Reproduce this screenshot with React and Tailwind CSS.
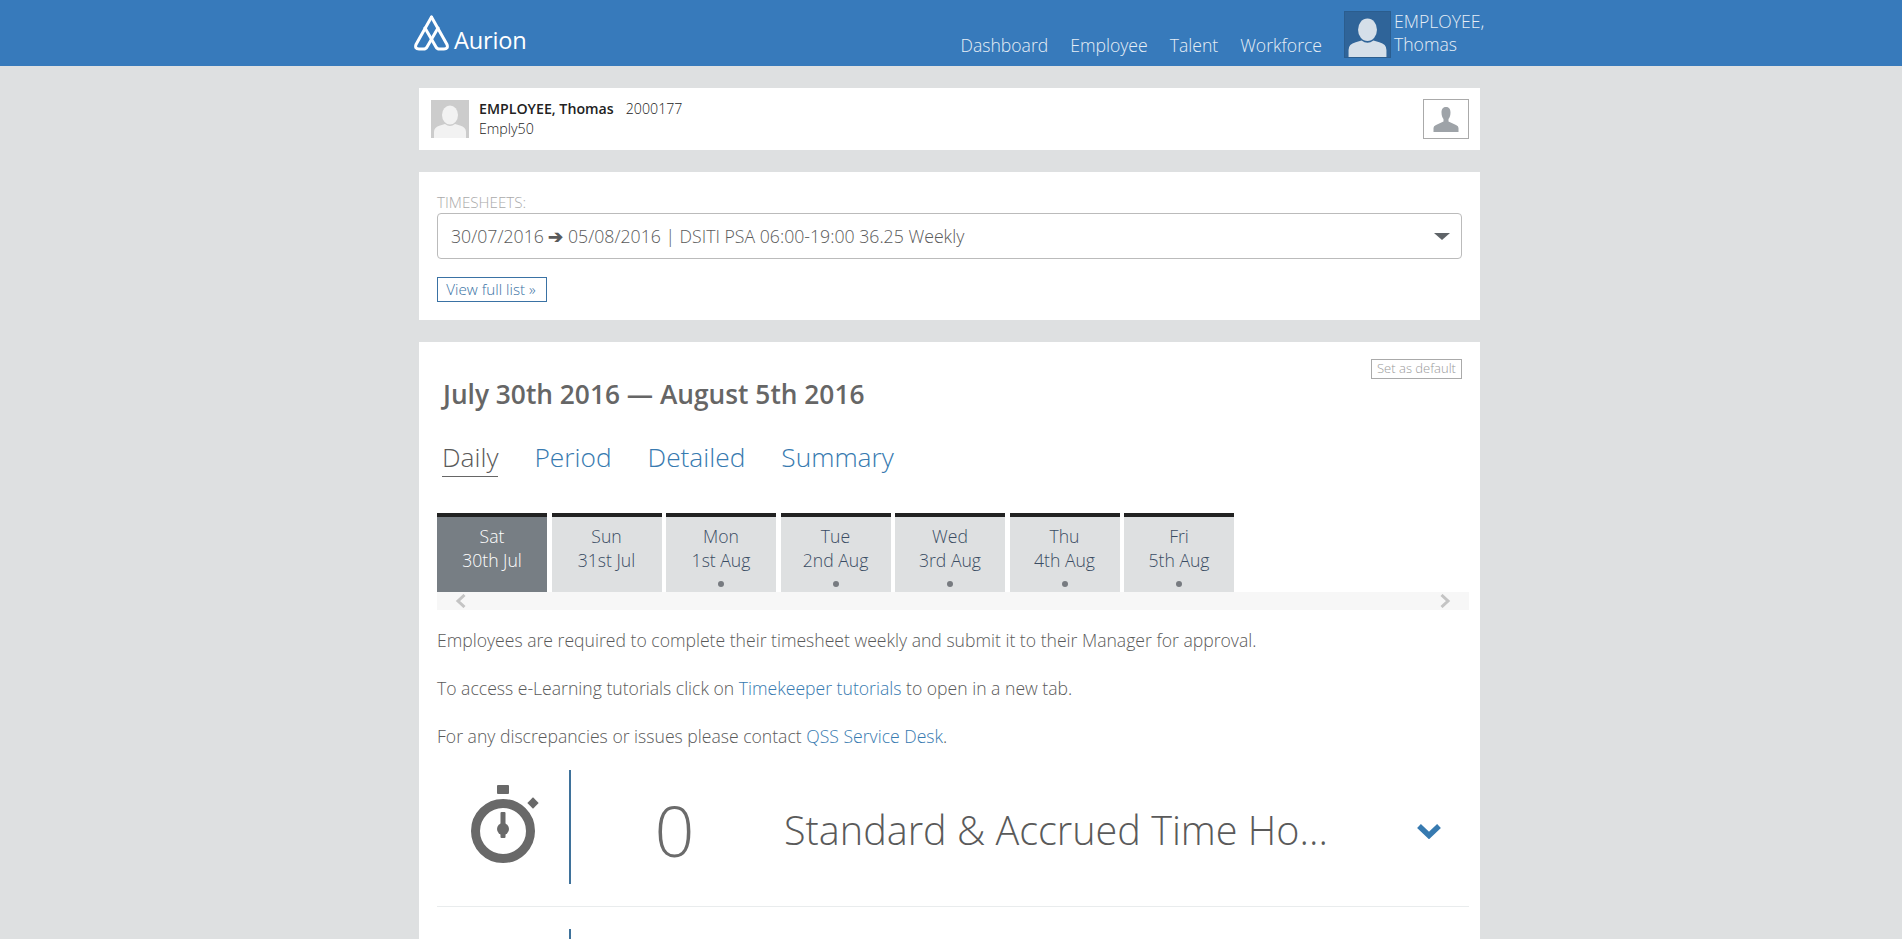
const sans = 'font-["Open_Sans",sans-serif]'

const days = [
  { day: 'Sat', date: '30th Jul', active: true },
  { day: 'Sun', date: '31st Jul' },
  { day: 'Mon', date: '1st Aug', dot: true },
  { day: 'Tue', date: '2nd Aug', dot: true },
  { day: 'Wed', date: '3rd Aug', dot: true },
  { day: 'Thu', date: '4th Aug', dot: true },
  { day: 'Fri', date: '5th Aug', dot: true },
]

function Logo() {
  return (
    <div className="flex items-end gap-[4px] ml-[1px]">
      <svg width="36" height="36" viewBox="0 0 36 36" fill="none" stroke="#fff" strokeWidth="3" strokeLinejoin="round" strokeLinecap="round">
        <path d="M17.5 2 L2 29.5 Q0.5 34 5 34 L9.5 34 Q12 34 13 32 L24 13" />
        <path d="M17.5 2 L33 29.5 Q34.5 34 30 34 L25.5 34 Q23 34 22 32 L11 13" />
      </svg>
      <span className="text-[23.6px] leading-[24px] font-normal text-white tracking-[-0.2px] -mb-[1px]">Aurion</span>
    </div>
  )
}

function Stopwatch() {
  return (
    <svg width="68" height="80" viewBox="0 0 68 80" fill="#696969">
      <rect x="26" y="0" width="12" height="9" rx="1" />
      <rect x="58" y="14" width="8" height="8" transform="rotate(45 62 18)" />
      <circle cx="32" cy="46" r="27.5" fill="none" stroke="#696969" strokeWidth="9" />
      <rect x="29.5" y="27" width="5" height="26" rx="1" />
      <circle cx="32" cy="44" r="6" />
    </svg>
  )
}

function Silhouette({ bg, fg }) {
  return (
    <svg className="w-full h-full block" viewBox="0 0 38 38" style={{ background: bg }}>
      <ellipse cx="19" cy="15" rx="8" ry="9.5" fill={fg} />
      <path d="M3 38 V32 Q3 27 9 25.5 L14 24 Q19 28 24 24 L29 25.5 Q35 27 35 32 V38 Z" fill={fg} />
    </svg>
  )
}

export default function App() {
  return (
    <div className={`h-screen overflow-hidden bg-[#dee0e1] ${sans} font-light text-[#5a5a5a]`}>
      <header className="h-[66px] bg-[#377abb] flex justify-center pr-[3px]">
        <div className="w-[1072px] flex justify-between -ml-[1px]">
          <div className="pt-[15px]"><Logo /></div>
          <nav className="flex items-start text-[17.6px] text-[#e6eef6]">
            <a className="mt-[32px] mr-[22px]">Dashboard</a>
            <a className="mt-[32px] mr-[22px]">Employee</a>
            <a className="mt-[32px] mr-[22px]">Talent</a>
            <a className="mt-[32px] mr-[22px]">Workforce</a>
            <div className="w-[47px] h-[47px] mt-[11px] mr-[3px] border border-[#2b5d8e] overflow-hidden">
              <Silhouette bg="#2f6499" fg="#d5dfe9" />
            </div>
            <div className="mt-[10px] w-[91px] leading-[23px]">EMPLOYEE, Thomas</div>
          </nav>
        </div>
      </header>

      <main className="flex flex-col items-center pr-[3px]">
        <section className="w-[1061px] h-[62px] mt-[22px] bg-white flex items-center justify-between pl-[12px] pr-[11px]">
          <div className="flex items-center gap-[10px]">
            <div className="w-[38px] h-[38px]"><Silhouette bg="#cccccc" fg="#f2f2f2" /></div>
            <div className="text-[14.2px] leading-[20px] text-[#222]">
              <div><b className="font-semibold mr-[12px] text-[#222]">EMPLOYEE, Thomas</b>2000177</div>
              <div>Emply50</div>
            </div>
          </div>
          <div className="w-[46px] h-[40px] border border-[#aaa] flex items-center justify-center">
            <svg width="26" height="26" viewBox="0 0 26 26" fill="#9ea3a8">
              <path d="M13 1 C9.5 1 8.5 3.5 8.5 6.5 C8.5 9.5 9.5 12 10.5 13 L10.5 15.5 L3 19 Q0.5 20 0.5 22 L0.5 26 L25.5 26 L25.5 22 Q25.5 20 23 19 L15.5 15.5 L15.5 13 C16.5 12 17.5 9.5 17.5 6.5 C17.5 3.5 16.5 1 13 1 Z" />
            </svg>
          </div>
        </section>

        <section className="w-[1061px] h-[148px] mt-[22px] bg-white pt-[20px] px-[18px]">
          <div className="text-[15.2px] leading-[20px] text-[#aaa]">TIMESHEETS:</div>
          <div className="w-[1025px] h-[46px] mt-[1px] border border-[#bbb] rounded-[4px] flex items-center justify-between pl-[13px] pr-[11px] text-[17.7px]">
            <span>30/07/2016 <span className="font-bold">➔</span> 05/08/2016 | DSITI PSA 06:00-19:00 36.25 Weekly</span>
            <span className="w-0 h-0 border-x-[8px] border-x-transparent border-t-[7px] border-t-[#5f6468]" />
          </div>
          <a className="mt-[18px] w-[110px] h-[25px] border border-[#3a72a4] flex items-center justify-center pr-[2px] text-[15.2px] text-[#3a72a4]">View full list »</a>
        </section>

        <section className="w-[1061px] h-[600px] mt-[22px] bg-white pl-[18px] pr-[11px] relative">
          <div className="flex justify-end pr-[7px] pt-[17px]">
            <a className="w-[91px] h-[20px] border border-[#aaa] flex items-center justify-center text-[13px] text-[#999]">Set as default</a>
          </div>
          <h1 className="-mt-[3px] ml-[6px] text-[26.3px] leading-[36px] font-semibold text-[#666]">July 30th 2016 — August 5th 2016</h1>
          <div className="mt-[27px] ml-[5px] flex gap-[36px] text-[26.3px] leading-[36px] text-[#377ab0]">
            <a className="text-[#5a5a5a] border-b border-[#666] h-[38px]">Daily</a>
            <a>Period</a>
            <a>Detailed</a>
            <a>Summary</a>
          </div>

          <div className="mt-[36px] flex gap-[4.5px]">
            {days.map(d => (
              <div
                key={d.day}
                className={`w-[110px] h-[79px] border-t-4 border-[#222] text-center text-[17.6px] leading-[24px] pt-[7px] relative ${d.active ? 'bg-[#777e84] text-white' : 'bg-[#dee0e1] text-[#3a4c63]'}`}
              >
                <div>{d.day}</div>
                <div>{d.date}</div>
                {d.dot && <span className="absolute left-1/2 -ml-[3px] bottom-[5px] w-[6px] h-[6px] rounded-full bg-[#777b80]" />}
              </div>
            ))}
          </div>
          <div className="h-[18px] bg-[#f7f7f7] flex items-center justify-between pl-[18px] pr-[18px]">
            <svg width="11" height="14" viewBox="0 0 11 14" fill="none" stroke="#c4c4c4" strokeWidth="3"><path d="M9.5 1 L3 7 L9.5 13" /></svg>
            <svg width="11" height="14" viewBox="0 0 11 14" fill="none" stroke="#c4c4c4" strokeWidth="3"><path d="M1.5 1 L8 7 L1.5 13" /></svg>
          </div>

          <div className="mt-[18px] text-[17.6px] leading-[24px] flex flex-col gap-[24px]">
            <p>Employees are required to complete their timesheet weekly and submit it to their Manager for approval.</p>
            <p>To access e-Learning tutorials click on <a className="text-[#377ab0]">Timekeeper tutorials</a> to open in a new tab.</p>
            <p>For any discrepancies or issues please contact <a className="text-[#377ab0]">QSS Service Desk</a>.</p>
          </div>

          <div className="mt-[22px] h-[137px] pb-[22px] border-b border-[#e9eced] flex items-stretch">
            <div className="w-[134px] border-r-2 border-[#3f729b] flex items-center justify-center pl-[4px]">
              <div className="mb-[5px]"><Stopwatch /></div>
            </div>
            <div className="w-[207px] pt-[7px] flex items-center justify-center text-[70px] text-[#6b6b6b]">0</div>
            <div className="flex-1 pl-[6px] pt-[7px] flex items-center text-[39.6px]">Standard &amp; Accrued Time Ho...</div>
            <div className="w-[52px] pt-[4px] flex items-center justify-start">
              <svg className="mt-[3px]" width="24" height="16" viewBox="0 0 24 16" fill="none" stroke="#377ab0" strokeWidth="5.5"><path d="M2 3 L12 12.5 L22 3" /></svg>
            </div>
          </div>
          <div className="mt-[22px] w-[134px] h-[100px] border-r-2 border-[#3f729b]" />
        </section>
      </main>
    </div>
  )
}
